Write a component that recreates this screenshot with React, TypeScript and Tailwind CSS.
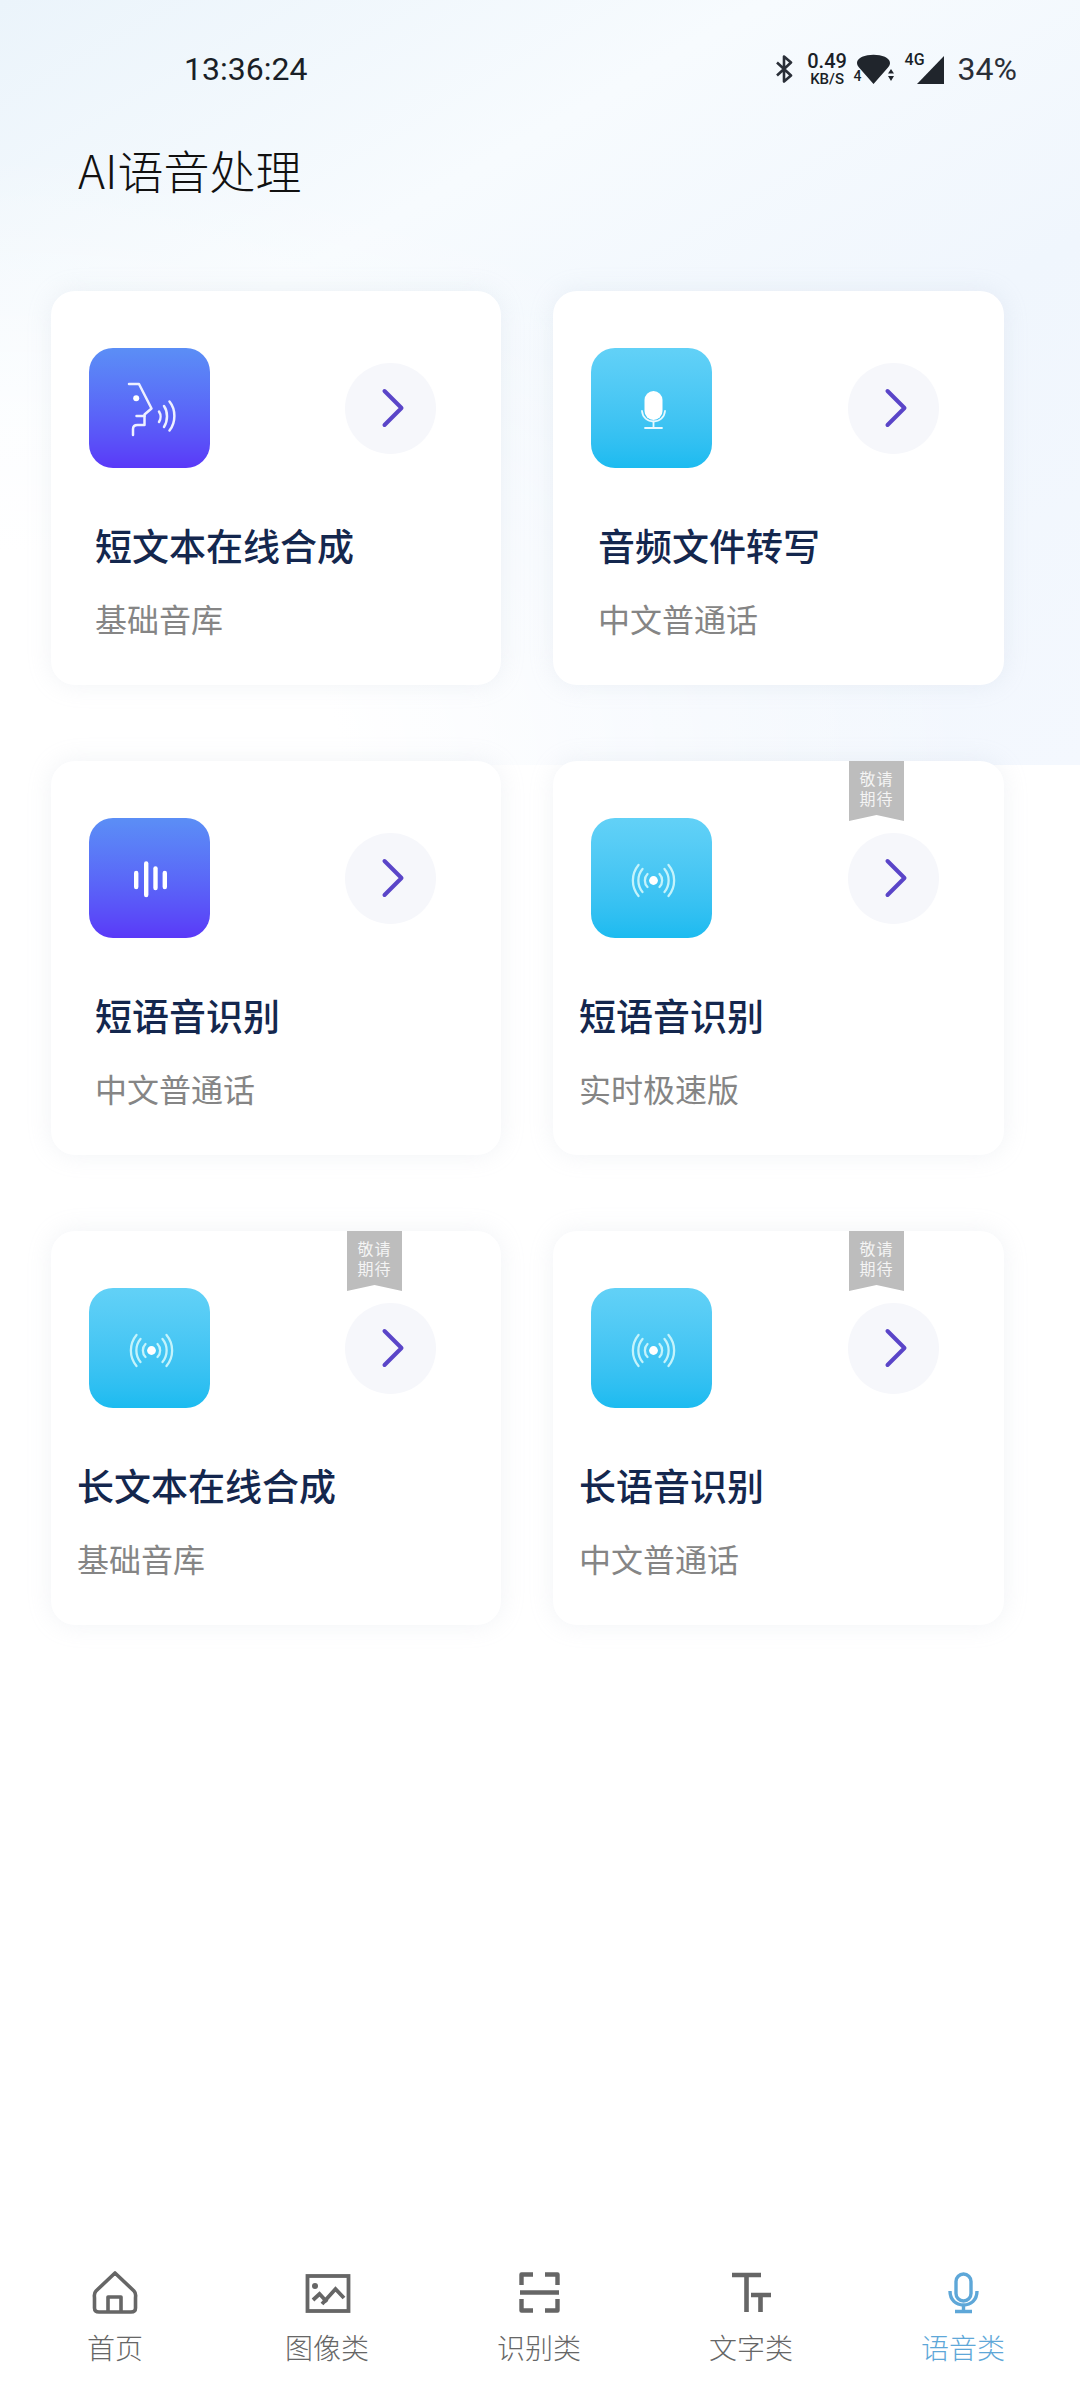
import React from "react";

const CJK = { fontFamily: '"Noto Sans CJK SC", "Noto Sans", sans-serif' };

function Face() {
  return (
    <svg viewBox="0 0 120 120" className="w-full h-full" fill="none" stroke="#eef0ff" strokeWidth="2.5" strokeLinecap="round" strokeLinejoin="round">
      <path d="M39.5 36H49.5L62 60.5L55 66.5V77H48C45 77 43.5 78.5 43.5 81V87" />
      <path d="M47 68H55" />
      <circle cx="46.7" cy="50.3" r="3" fill="#fff" stroke="none" />
      <path d="M69.5 63.5C71.5 66.5 71.5 71 69.5 74" />
      <path d="M74.5 58C78.5 63.5 78.5 73 74.5 79" />
      <path d="M80 53.5C86.5 61.5 86.5 74.5 80 82.5" />
    </svg>
  );
}

function MicWhite() {
  return (
    <svg viewBox="0 0 120 120" className="w-full h-full" fill="none" stroke="#e6f9ff" strokeWidth="1.8" strokeLinecap="round">
      <rect x="53" y="43" width="18" height="29" rx="9" fill="#fff" stroke="none" />
      <path d="M50.5 63C51 69.5 56 73.5 62 73.5C68 73.5 73 69.5 73.5 63" />
      <path d="M62 73.5V80M53.5 80H70.5" />
    </svg>
  );
}

function Bars() {
  return (
    <svg viewBox="0 0 120 120" className="w-full h-full" fill="none" stroke="#fff" strokeWidth="4.4" strokeLinecap="round">
      <path d="M46.7 55V69" />
      <path d="M56.7 45.5V77" />
      <path d="M66 50.5V70" />
      <path d="M75.3 55V69" />
    </svg>
  );
}

function Broadcast() {
  return (
    <svg viewBox="0 0 120 120" className="w-full h-full" fill="none" stroke="#c4f3fb" strokeWidth="2.3" strokeLinecap="round">
      <circle cx="62" cy="62.5" r="4.4" fill="#fff" stroke="none" />
      <path d="M56 56C52.5 59.5 52.5 65.5 56 69M68 56C71.5 59.5 71.5 65.5 68 69" />
      <path d="M51 51C45.5 57.5 45.5 67.5 51 74M73 51C78.5 57.5 78.5 67.5 73 74" />
      <path d="M47 47C39.5 56 39.5 69 47 78M77 47C84.5 56 84.5 69 77 78" />
    </svg>
  );
}

function Chevron() {
  return (
    <svg width="24" height="40" viewBox="0 0 24 40" fill="none" stroke="#5a45c8" strokeWidth="4" strokeLinecap="round" strokeLinejoin="round">
      <path d="M3.5 3L20.5 20L3.5 37" />
    </svg>
  );
}

type Card = {
  title: string;
  sub: string;
  icon: React.ReactNode;
  purple?: boolean;
  ribbon?: boolean;
  textPad: string;
};

const cards: Card[] = [
  { title: "短文本在线合成", sub: "基础音库", icon: <Face />, purple: true, textPad: "pl-[44px]" },
  { title: "音频文件转写", sub: "中文普通话", icon: <MicWhite />, textPad: "pl-[45px]" },
  { title: "短语音识别", sub: "中文普通话", icon: <Bars />, purple: true, textPad: "pl-[44px]" },
  { title: "短语音识别", sub: "实时极速版", icon: <Broadcast />, ribbon: true, textPad: "pl-[26px]" },
  { title: "长文本在线合成", sub: "基础音库", icon: <Broadcast />, ribbon: true, textPad: "pl-[26px]" },
  { title: "长语音识别", sub: "中文普通话", icon: <Broadcast />, ribbon: true, textPad: "pl-[26px]" },
];

function CardView({ c }: { c: Card }) {
  return (
    <div className="relative h-[394px] rounded-[24px] bg-white shadow-[0_0_24px_rgba(175,188,205,0.18)]">
      {c.ribbon && (
        <div className="absolute top-0 left-[296px] w-[55px] h-[60px] bg-[#bdbdbd] text-[#f4f4f4] text-[16px] tracking-[1px] leading-[20px] text-center pt-[7px] [clip-path:polygon(0_0,100%_0,100%_100%,50%_90%,0_100%)]">
          <div>敬请</div>
          <div>期待</div>
        </div>
      )}
      <div className="flex items-center justify-between pt-[57px] pl-[38px] pr-[65px]">
        <div className={`w-[121px] h-[120px] rounded-[24px] ${c.purple ? "bg-gradient-to-b from-[#5b8ef6] to-[#5a38f8]" : "bg-gradient-to-b from-[#62d1f7] to-[#1bbbf0]"}`}>
          {c.icon}
        </div>
        <div className="w-[91px] h-[91px] rounded-full bg-[#f6f7fb] flex items-center justify-center pl-[4px]">
          <Chevron />
        </div>
      </div>
      <div className={c.textPad}>
        <div className="mt-[53px] text-[37px] leading-[48px] font-medium text-[#14274e]">{c.title}</div>
        <div className="mt-[29px] text-[32px] leading-[40px] text-[#858585]">{c.sub}</div>
      </div>
    </div>
  );
}

const navStroke = "#666666";

function HomeIcon() {
  return (
    <svg width="48" height="48" viewBox="0 0 48 48" fill="none" stroke={navStroke} strokeWidth="3.6" strokeLinejoin="round">
      <path d="M24 5L43 23C45.5 25.5 44.5 28 44.5 30V40C44.5 43 43 44 40 44H8C5 44 3.5 43 3.5 40V30C3.5 28 2.5 25.5 5 23Z" />
      <path d="M17 44V29H30V44" />
    </svg>
  );
}

function ImageIcon() {
  return (
    <svg width="48" height="48" viewBox="0 0 48 48" fill="none" stroke={navStroke} strokeWidth="3.8">
      <rect x="4.5" y="8" width="41" height="35" />
      <circle cx="12" cy="18" r="3" fill={navStroke} stroke="none" />
      <path d="M10 32L16.5 26L24 34" />
      <path d="M19 36L32.5 21L41 30" />
    </svg>
  );
}

function ScanIcon() {
  return (
    <svg width="48" height="48" viewBox="0 0 48 48" fill="none" stroke={navStroke} strokeWidth="4.4" strokeLinejoin="round">
      <path d="M18 6.5H6.5V17M30 6.5H42.5V17M6.5 31V42.5H18M42.5 31V42.5H30" />
      <path d="M5 24.5H44" />
    </svg>
  );
}

function TextIcon() {
  return (
    <svg width="48" height="48" viewBox="0 0 48 48" fill="none" stroke={navStroke} strokeWidth="4.6">
      <path d="M5 7H34M19.5 7V44" />
      <path d="M24 27H44M33.5 27V44" />
    </svg>
  );
}

function MicNav() {
  return (
    <svg width="48" height="48" viewBox="0 0 48 48" fill="none" stroke="#5ea7d8" strokeWidth="3.4">
      <rect x="17" y="6" width="15" height="27" rx="7.5" />
      <path d="M11 23C11 32 17 37 24.5 37C32 37 38 32 38 23" />
      <path d="M24.5 37V43M16 43.5H33" />
    </svg>
  );
}

const nav = [
  { label: "首页", icon: <HomeIcon />, active: false },
  { label: "图像类", icon: <ImageIcon />, active: false },
  { label: "识别类", icon: <ScanIcon />, active: false },
  { label: "文字类", icon: <TextIcon />, active: false },
  { label: "语音类", icon: <MicNav />, active: true },
];

function StatusBar() {
  return (
    <div className="flex items-center justify-between h-[40px] pl-[184px] pr-[63px] text-[#1a1f27]" style={{ fontFamily: "Roboto, sans-serif" }}>
      <span className="text-[32px] leading-[40px] font-normal">13:36:24</span>
      <div className="flex items-center">
        <svg width="18" height="28" viewBox="0 0 18 28" fill="none" stroke="#2a2f38" strokeWidth="2.6" strokeLinejoin="round">
          <path d="M2 7.5L16 20.5L9 26.5V1.5L16 7.5L2 20.5" />
        </svg>
        <div className="ml-[14px] w-[41px] flex flex-col items-center font-medium">
          <span className="text-[20px] leading-[18px]">0.49</span>
          <span className="text-[15px] leading-[14px] mt-[2px]">KB/S</span>
        </div>
        <div className="relative ml-[6px] w-[40px] h-[30px]">
          <svg width="40" height="30" viewBox="0 0 40 30" fill="#20252c">
            <path d="M3 9C3 -2 36 -2 36 9C36 11 35 12 34 13.5L19.5 30L5 13.5C4 12 3 11 3 9Z" />
            <path d="M34 19.5L37 15L40 19.5ZM34 22H40L37 27Z" />
          </svg>
          <span className="absolute left-0 top-[15px] text-[14px] leading-[15px] font-medium">4</span>
        </div>
        <div className="relative ml-[11px] w-[39px] h-[30px]">
          <svg width="39" height="30" viewBox="0 0 39 30" fill="#20252c">
            <path d="M39 2V30H12Z" />
          </svg>
          <span className="absolute left-0 top-[-2px] text-[16px] leading-[16px] font-medium">4G</span>
        </div>
        <span className="ml-[14px] text-[32px] leading-[40px] font-normal text-[#2a2f38]">34%</span>
      </div>
    </div>
  );
}

export default function App() {
  return (
    <div
      className="w-[1080px] h-[2400px] flex flex-col bg-white bg-no-repeat bg-[length:100%_765px] bg-[radial-gradient(ellipse_90%_80%_at_0%_100%,#ffffff_35%,rgba(255,255,255,0)_100%),linear-gradient(150deg,#ebf4fb_0%,#f7fbfe_32%,#f0f6fd_62%,#f4f8fe_100%)] pt-[49px]"
      style={CJK}
    >
      <StatusBar />
      <h1 className="mt-[50px] pl-[78px] text-[46px] leading-[60px] font-light text-[#111111]">AI语音处理</h1>
      <div className="mt-[92px] pl-[51px] grid grid-cols-[450px_451px] gap-x-[52px] gap-y-[76px]">
        {cards.map((c, i) => (
          <CardView key={i} c={c} />
        ))}
      </div>
      <div className="mt-auto pl-[9px] pb-[35px] grid grid-cols-[repeat(5,212px)]">
        {nav.map((n) => (
          <div key={n.label} className="flex flex-col items-center">
            <div className="mb-[13px]">{n.icon}</div>
            <span className={`text-[28px] leading-[36px] font-light ${n.active ? "text-[#5ea7d8]" : "text-[#666666]"}`}>{n.label}</span>
          </div>
        ))}
      </div>
    </div>
  );
}
